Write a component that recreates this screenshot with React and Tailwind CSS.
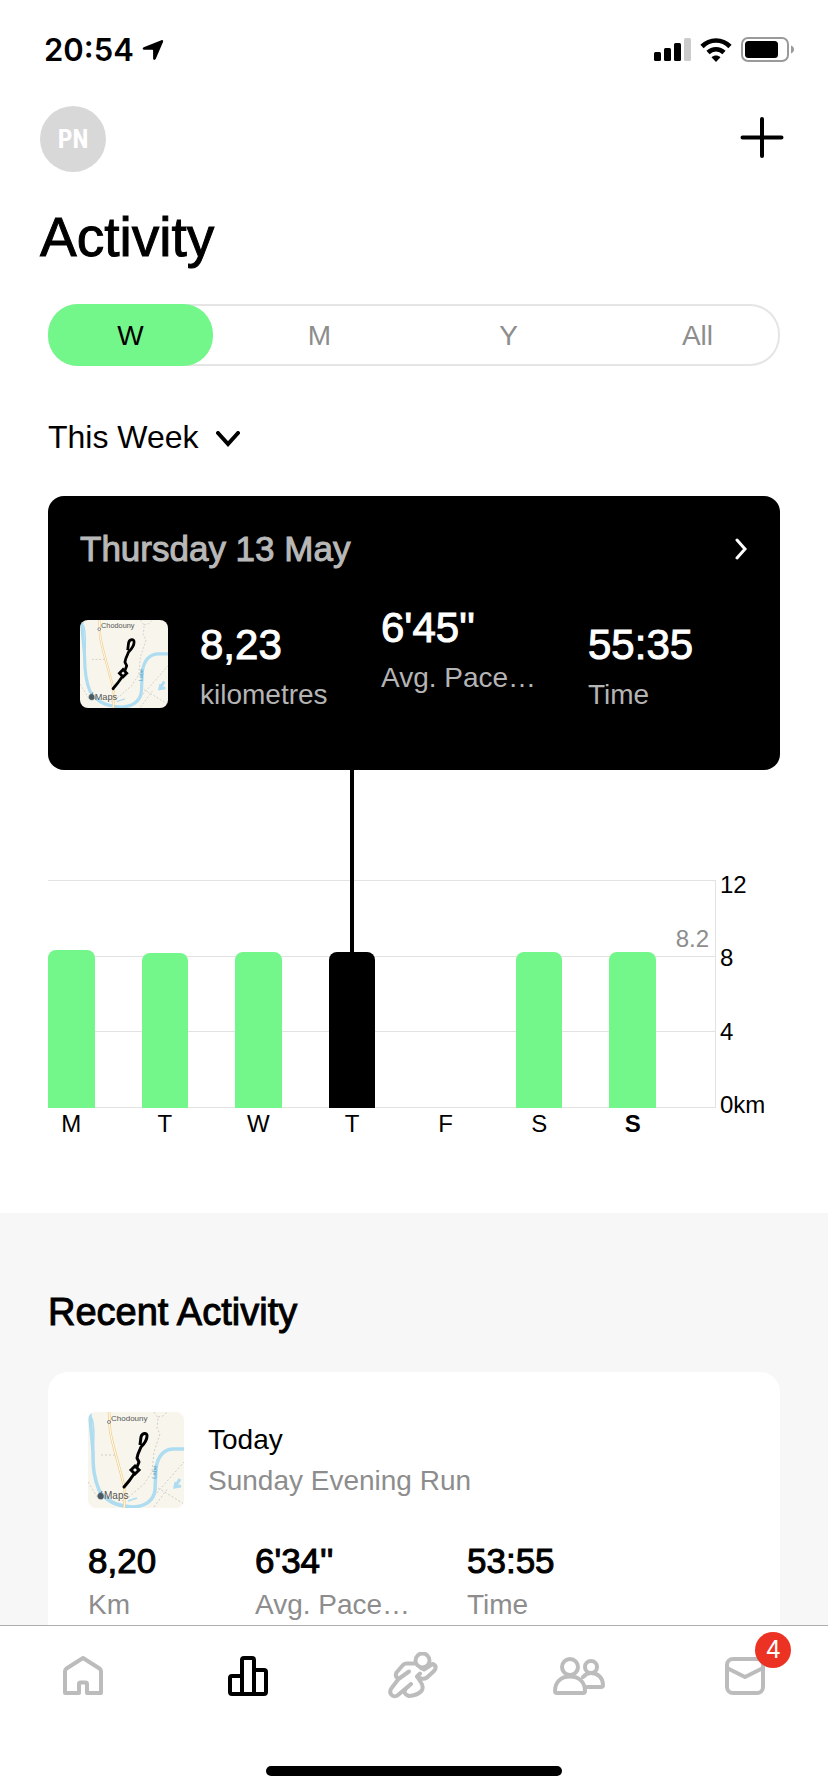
import { useState } from "react";

const ranges = ["W", "M", "Y", "All"];

const week = [
  { day: "M", km: 8.32 },
  { day: "T", km: 8.18 },
  { day: "W", km: 8.23 },
  { day: "T", km: 8.23 },
  { day: "F", km: 0 },
  { day: "S", km: 8.23 },
  { day: "S", km: 8.23, today: true },
];

const MAX_KM = 12;

function StatusBar() {
  return (
    <div className="flex h-[99px] shrink-0 items-center justify-between pl-11 pr-[34px]">
      <div className="flex items-center gap-2">
        <span className="font-['Inter',sans-serif] text-[31px] font-semibold leading-9">20:54</span>
        <svg width="22" height="22" viewBox="0 0 22 22" aria-hidden="true">
          <path
            d="M19.400 1.200 1.700 8.300c-1.600.7-1.300 2.400.4 2.400h8.300c.5 0 .7.2.7.7v7.900c0 1.900 1.900 2.200 2.700.5L21 3c.6-1.300-.4-2.300-1.600-1.800z"
            fill="#000"
          />
        </svg>
      </div>
      <div className="flex items-center gap-[9px]">
        <svg width="37" height="24" viewBox="0 0 37 24" aria-hidden="true">
          <rect x="0" y="14" width="7" height="9" rx="1.5" />
          <rect x="10" y="10" width="7" height="13" rx="1.5" />
          <rect x="20" y="5" width="7" height="18" rx="1.5" />
          <rect x="30" y="0" width="7" height="23" rx="1.5" fill="#cbcbcb" />
        </svg>
        <svg width="32" height="24" viewBox="0 0 32 24" aria-hidden="true">
          <path d="M2 8.500C10 .500 22 .500 30 8.500M8 14.500c4.500-4.300 11.500-4.300 16 0" fill="none" stroke="#000" strokeWidth="4.600" />
          <path d="M11.500 19.300c2.600-2.300 6.400-2.300 9 0L16 24z" />
        </svg>
        <svg width="53" height="25" viewBox="0 0 53 25" aria-hidden="true">
          <rect x="1" y="1" width="46" height="23" rx="6" fill="none" stroke="#9a9a9a" strokeWidth="2" />
          <rect x="4" y="4" width="33" height="17" rx="3.500" />
          <path d="M50 8.500c2 .8 3 2.200 3 4s-1 3.200-3 4z" fill="#9a9a9a" />
        </svg>
      </div>
    </div>
  );
}

function RunMap({ className }) {
  return (
    <svg viewBox="0 0 96 96" className={className} role="img" aria-label="Route map">
      <rect width="96" height="96" fill="#f8f5ec" />
      <g fill="none" stroke="#cfcdc8" strokeWidth="1" strokeDasharray="2 2">
        <path d="M66 0l4 6-1 10 3 6-6 18-2 20-8 12-14 12-8 5" />
        <path d="M70 5l5-1 4-4M13 43h14M0 70l10 16M70 76l26 16M66 84l30-34M66 95l14-19" />
      </g>
      <g fill="none" stroke="#aedcf1">
        <path d="M2 0c0 12 2 24 3 40 0 16 1 26 6 38 6 10 18 16 33 17 12 0 22-6 23-17l1-22c2-12 8-19 18-19h10" strokeWidth="3.500" />
        <path d="M4 6c3 10 2 24 1 34M12 80c5 8 14 14 22 14M40 89l9-3" strokeWidth="1.500" />
        <path d="M92 67l-5 8M88 70l-1 5 6-1" strokeWidth="3" />
      </g>
      <path d="M21 0l1 18c2 14 10 38 14 56 2 8 1 14 0 22" fill="none" stroke="#f3cf8b" strokeWidth="2.500" />
      <path d="M21 0l1 18c2 14 10 38 14 56 2 8 1 14 0 22" fill="none" stroke="#fff" strokeWidth="1" />
      <circle cx="21" cy="10" r="1.500" fill="#fff" stroke="#555" strokeWidth=".7" />
      <text x="23" y="9" fontSize="8" fill="#555" fontFamily="Liberation Sans, sans-serif">Chodouny</text>
      <text x="68" y="67" fontSize="6" fill="#4f9fc4" transform="rotate(-85 68 67)" fontFamily="Liberation Sans, sans-serif">Labe</text>
      <path
        d="M52 33l1-8c1-4 6-5 6-1 0 3-3 8-6 11l-3 7-1 4 2 4-2 5"
        fill="none"
        stroke="#000"
        strokeWidth="3"
        strokeLinejoin="round"
      />
      <path d="M47 54l4 4-4 4-4-4zM46 62l-5 7-5 6" fill="none" stroke="#000" strokeWidth="3" strokeLinecap="round" />
      <path d="M13 81c-4-1-4 6-1 6h2c2 0 2-6-1-6zM13 81l1-2" fill="#4a5a63" stroke="#4a5a63" strokeWidth=".7" />
      <text x="16" y="87" fontSize="10" fill="#555" fontFamily="Liberation Sans, sans-serif">Maps</text>
    </svg>
  );
}

function Header() {
  return (
    <header className="pl-10 pr-11 pt-[7px]">
      <div className="flex items-center justify-between">
        <button
          aria-label="Profile"
          className="flex size-[66px] items-center justify-center rounded-full bg-[#d8d8d8] font-['Liberation_Sans_Narrow','Roboto_Condensed','Liberation_Sans',sans-serif] text-[26px] font-bold text-white"
        >
          PN
        </button>
        <button aria-label="Add activity">
          <svg width="44" height="44" viewBox="0 0 44 44" stroke="#000" strokeWidth="4" strokeLinecap="round">
            <path d="M22 2v37M2.500 20.500h39" />
          </svg>
        </button>
      </div>
      <h1 className="mt-[33px] text-[55px] leading-[64px] [-webkit-text-stroke:1px_currentColor]">Activity</h1>
    </header>
  );
}

function RangeTabs() {
  const [range, setRange] = useState("W");
  return (
    <div className="mt-[35px] flex h-[62px] gap-6 rounded-[30px] shadow-[inset_0_0_0_2px_#e5e5e5]">
      {ranges.map((r) => (
        <button
          key={r}
          onClick={() => setRange(r)}
          className={
            r === range
              ? "flex-1 rounded-[30px] bg-[#73f78b] pt-0.5 text-[28px] text-black"
              : "flex-1 rounded-[30px] pt-0.5 text-[28px] text-[#8d8d8d]"
          }
        >
          {r}
        </button>
      ))}
    </div>
  );
}

function CardStat({ value, label, className = "" }) {
  return (
    <div className={className}>
      <p className="text-[42px] leading-[50px] text-white [-webkit-text-stroke:1px_currentColor]">{value}</p>
      <p className="mt-[6px] truncate text-[28px] leading-[38px] text-[#b4b4b4]">{label}</p>
    </div>
  );
}

function DayCard() {
  return (
    <article className="mt-[39px] rounded-2xl bg-black px-8 pb-14 pt-8">
      <div className="flex items-center justify-between">
        <h2 className="text-[35px] leading-[42px] text-[#b8b8b8] [-webkit-text-stroke:1px_currentColor]">Thursday 13 May</h2>
        <button aria-label="Open run">
          <svg width="14" height="22" viewBox="0 0 14 22" fill="none" stroke="#fff" strokeWidth="3" strokeLinecap="round">
            <path d="M3 2l8 9-8 9" />
          </svg>
        </button>
      </div>
      <div className="mt-[50px] grid grid-cols-[120px_181fr_207fr_160fr]">
        <RunMap className="size-[88px] rounded-lg" />
        <CardStat value="8,23" label="kilometres" />
        <CardStat value="6'45''" label="Avg. Pace…" className="-mt-[17px]" />
        <CardStat value="55:35" label="Time" />
      </div>
    </article>
  );
}

function WeekChart() {
  const [selected] = useState(3);
  return (
    <div className="pb-[75px] pt-[110px]">
      <div className="flex">
        <div className="relative h-[228px] flex-1 border-r border-[#e2e2e2]">
          <div className="absolute inset-0 flex flex-col justify-between">
            <div className="h-px bg-[#e2e2e2]" />
            <div className="h-px bg-[#e2e2e2]" />
            <div className="h-px bg-[#e2e2e2]" />
            <div className="h-px bg-[#e2e2e2]" />
          </div>
          <div className="relative flex h-full items-end gap-[47px] pr-[59px]">
            {week.map(({ km }, i) => (
              <div
                key={i}
                className={i === selected ? "relative flex-1 rounded-t-lg bg-black" : "relative flex-1 rounded-t-lg bg-[#73f78b]"}
                style={{ height: `${(km / MAX_KM) * 100}%` }}
              >
                {i === selected && <div className="absolute bottom-full left-1/2 h-[182px] w-1 -translate-x-1/2 bg-black" />}
              </div>
            ))}
          </div>
          <span className="absolute bottom-[155px] right-[6px] text-2xl leading-7 text-[#8d8d8d]">8.2</span>
        </div>
        <div className="-mb-[11px] -mt-[9px] flex w-16 flex-col justify-between pl-1 text-2xl leading-7">
          <span>12</span>
          <span>8</span>
          <span>4</span>
          <span>0km</span>
        </div>
      </div>
      <div className="mt-0.5 flex gap-[47px] pr-[124px] text-center text-2xl leading-7">
        {week.map(({ day, today }, i) => (
          <span key={i} className={today ? "flex-1 font-bold" : "flex-1"}>
            {day}
          </span>
        ))}
      </div>
    </div>
  );
}

function RecentStat({ value, label }) {
  return (
    <div>
      <p className="text-[35px] leading-10 [-webkit-text-stroke:1px_currentColor]">{value}</p>
      <p className="mt-[5px] truncate text-[28px] leading-[38px] text-[#8d8d8d]">{label}</p>
    </div>
  );
}

function RecentActivity() {
  return (
    <section className="bg-[#f7f7f7] px-12 pb-10 pt-[77px]">
      <h2 className="text-[38px] leading-[44px] [-webkit-text-stroke:1px_currentColor]">Recent Activity</h2>
      <article className="mt-[38px] rounded-[20px] bg-white p-10">
        <div className="flex items-center gap-6">
          <RunMap className="size-24 rounded-lg" />
          <div className="text-[28px] leading-[41px]">
            <p>Today</p>
            <p className="text-[#8d8d8d]">Sunday Evening Run</p>
          </div>
        </div>
        <div className="mt-[33px] grid grid-cols-[167fr_212fr_273fr]">
          <RecentStat value="8,20" label="Km" />
          <RecentStat value="6'34''" label="Avg. Pace…" />
          <RecentStat value="53:55" label="Time" />
        </div>
      </article>
    </section>
  );
}

function TabBar() {
  const line = { fill: "none", stroke: "currentColor", strokeWidth: 4, strokeLinejoin: "round", strokeLinecap: "round" };
  return (
    <nav className="shrink-0 border-t border-[#adadad] bg-white">
      <div className="grid grid-cols-5 justify-items-center pb-[66px] pt-[26px] text-[#bcbcbc]">
        <a href="#home" aria-label="Home">
          <svg width="48" height="48" viewBox="0 0 48 48" {...line}>
            <path d="M24 6 7.500 16.500Q6 17.500 6 19.500V41H20V32q0-1.500 1.500-1.500h5q1.500 0 1.500 1.500v9H42V19.500Q42 17.500 40.500 16.500z" />
          </svg>
        </a>
        <a href="#activity" aria-label="Activity" className="text-black">
          <svg width="48" height="48" viewBox="0 0 48 48" {...line}>
            <path d="M18 42V8q0-2 2-2h8q2 0 2 2v34M18 24H8q-2 0-2 2v14q0 2 2 2h32q2 0 2-2V20q0-2-2-2H30" />
          </svg>
        </a>
        <a href="#run" aria-label="Run">
          <svg width="52" height="48" viewBox="0 0 52 48" {...line}>
            <circle cx="34.500" cy="8.500" r="7" />
            <path d="M26.500 11.500H18.500Q16 11.500 14.500 13.500L8.500 20.500Q6.500 24 10.500 27L4 35.500C-.5 41 5 47 10 43L23 32M21 19.500 10.500 27M23 32l-5 4.500q-4 5 3 7.500 8-.5 12.500-5 2.500-4-.5-8.500L29 24.500M29 24.500l3-3M29 24.500l4 2q3 1 6-1l7-6.500q4-5-1.500-7L36 17.500l-3-1.500" />
          </svg>
        </a>
        <a href="#club" aria-label="Club">
          <svg width="56" height="48" viewBox="0 0 56 48" {...line}>
            <circle cx="18" cy="15" r="8" />
            <circle cx="39" cy="15" r="6" />
            <path d="M3 39C3 30 9 24.500 18 24.500S33 30 33 39q0 2-2 2H5q-2 0-2-2zM31 25c3-3 5-4 8-4 7 0 12 5 12 12 0 2-1 2-2 2H35" />
          </svg>
        </a>
        <a href="#inbox" aria-label="Inbox" className="relative">
          <svg width="48" height="48" viewBox="0 0 48 48" {...line}>
            <rect x="6" y="7" width="36" height="34" rx="6" />
            <path d="M6 16l18 9 18-9" />
          </svg>
          <span className="absolute -right-[22px] -top-5 flex size-9 items-center justify-center rounded-full bg-[#ec3223] font-['Inter',sans-serif] text-2xl text-white">
            4
          </span>
        </a>
      </div>
      <div className="mx-auto mb-4 h-2.5 w-[296px] rounded-full bg-black" />
    </nav>
  );
}

export default function App() {
  return (
    <div className="flex h-screen flex-col bg-white font-['Liberation_Sans',Arial,sans-serif] text-black">
      <StatusBar />
      <main className="min-h-0 flex-1 overflow-y-auto [scrollbar-width:none]">
        <Header />
        <section className="px-12">
          <RangeTabs />
          <button className="mt-[51px] flex items-center gap-[17px] text-[32px] leading-10">
            This Week
            <svg width="24" height="16" viewBox="0 0 24 16" fill="none" stroke="#000" strokeWidth="4" strokeLinecap="round" className="mt-1">
              <path d="M2 2l10 11L22 2" />
            </svg>
          </button>
          <DayCard />
          <WeekChart />
        </section>
        <RecentActivity />
      </main>
      <TabBar />
    </div>
  );
}
